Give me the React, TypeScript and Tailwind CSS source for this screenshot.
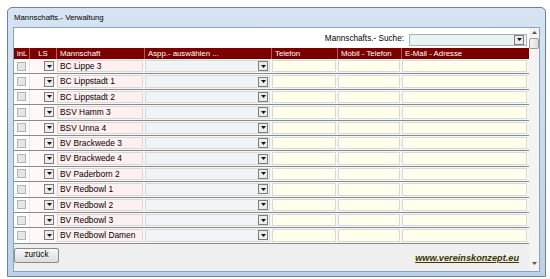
import React from 'react';

const teams = [
  'BC Lippe 3',
  'BC Lippstadt 1',
  'BC Lippstadt 2',
  'BSV Hamm 3',
  'BSV Unna 4',
  'BV Brackwede 3',
  'BV Brackwede 4',
  'BV Paderborn 2',
  'BV Redbowl 1',
  'BV Redbowl 2',
  'BV Redbowl 3',
  'BV Redbowl Damen',
];

const cols = 'grid grid-cols-[15px_27px_88px_127px_66px_64px_127px]';

const DropBtn: React.FC = () => (
  <div className="w-[10px] h-[10px] border border-[#7d7d7d] bg-[#ececec] flex items-center justify-center shrink-0">
    <svg width="5" height="3" viewBox="0 0 5 3">
      <path d="M0 0H5L2.5 3Z" fill="#111" />
    </svg>
  </div>
);

const Row: React.FC<{ name: string }> = ({ name }) => (
  <div className={`${cols} h-[15.4px] border-b border-[#8a8a8a] bg-[#f7f7f7]`}>
    <div className="flex items-center justify-center bg-white">
      <div className="w-[9px] h-[9px] border border-[#b4b4b4] bg-[#e6e6e6]" />
    </div>
    <div className="flex items-center justify-end pr-[2px] bg-[#fff8f8] border-l border-[#e6e6e6]">
      <DropBtn />
    </div>
    <div className="p-[1px]">
      <div className="h-full bg-[#fff0f0] border border-[#d8d8d8] pl-[2px] flex items-center text-[8.4px] text-black leading-none">
        {name}
      </div>
    </div>
    <div className="p-[1px]">
      <div className="h-full bg-[#eff5f7] border border-[#d8d8d8] flex items-center justify-end pr-[1px]">
        <DropBtn />
      </div>
    </div>
    <div className="p-[1px]">
      <div className="h-full bg-[#ffffec] border border-[#d8d8d8]" />
    </div>
    <div className="p-[1px]">
      <div className="h-full bg-[#ffffec] border border-[#d8d8d8]" />
    </div>
    <div className="p-[1px]">
      <div className="h-full bg-[#ffffec] border border-[#d8d8d8]" />
    </div>
  </div>
);

const App: React.FC = () => {
  const heads = ['inL', 'LS', 'Mannschaft', 'Aspp.- auswählen ...', 'Telefon', 'Mobil - Telefon', 'E-Mail - Adresse'];
  return (
    <div className="w-[550px] h-[279px] bg-white pt-[7px] pl-[7px] font-['Liberation_Sans',Arial,sans-serif] overflow-hidden">
      <div className="w-[539px] h-[270px] border border-[#6f8194] rounded-t-[5px] bg-gradient-to-b from-[#d6e4f3] to-[#bcd2ea] flex flex-col px-[5px] pb-[4px]">
        <div className="h-[19px] flex items-center pl-[1px] text-[7.8px] text-black">Mannschafts.- Verwaltung</div>
        <div className="flex-1 bg-white border border-[#8ea2b6] flex min-h-0">
          <div className="w-[516px] flex flex-col">
            <div className="h-[20px] flex items-center justify-end gap-[5px] pr-[2px] pt-[3px]">
              <span className="text-[8.2px] text-black">Mannschafts.- Suche:</span>
              <div className="w-[118px] h-[12px] bg-[#e8f3f3] border border-[#a9b4b9] flex items-center justify-end pr-[2px]">
                <DropBtn />
              </div>
            </div>
            <div className={`${cols} h-[11px] bg-[#7a0000] text-white text-[7.8px] leading-none`}>
              {heads.map((h, i) => (
                <div
                  key={h}
                  className={`flex items-center ${i === 1 ? 'justify-center' : 'pl-[3px]'} ${i > 0 ? 'border-l border-[#b85a5a]' : 'pl-[1px]'}`}
                >
                  {h}
                </div>
              ))}
            </div>
            {teams.map((t) => (
              <Row key={t} name={t} />
            ))}
            <div className="flex-1 bg-[#efefef] flex items-start justify-between pt-[4px] pr-[10px]">
              <div className="w-[45px] h-[15px] border border-[#8b8b8b] rounded-[2px] bg-gradient-to-b from-[#f8f8f8] to-[#dcdcdc] flex items-center justify-center text-[8.2px] text-black">
                zurück
              </div>
              <a className="mt-[4px] text-[9.2px] font-bold italic text-[#3b3500] underline">www.vereinskonzept.eu</a>
            </div>
          </div>
          <div className="flex-1 bg-[#f4f4f4] flex flex-col items-center pt-[2px] pb-[6px]">
            <svg width="5" height="3" viewBox="0 0 5 3" className="mt-[1px]">
              <path d="M0 3H5L2.5 0Z" fill="#555" />
            </svg>
            <div className="w-[10px] h-[11px] mt-[4px] border border-[#9a9a9a] rounded-[2px] bg-gradient-to-r from-[#f6f6f6] to-[#dedede]" />
            <div className="flex-1" />
            <svg width="5" height="3" viewBox="0 0 5 3">
              <path d="M0 0H5L2.5 3Z" fill="#555" />
            </svg>
          </div>
        </div>
      </div>
    </div>
  );
};

export default App;
